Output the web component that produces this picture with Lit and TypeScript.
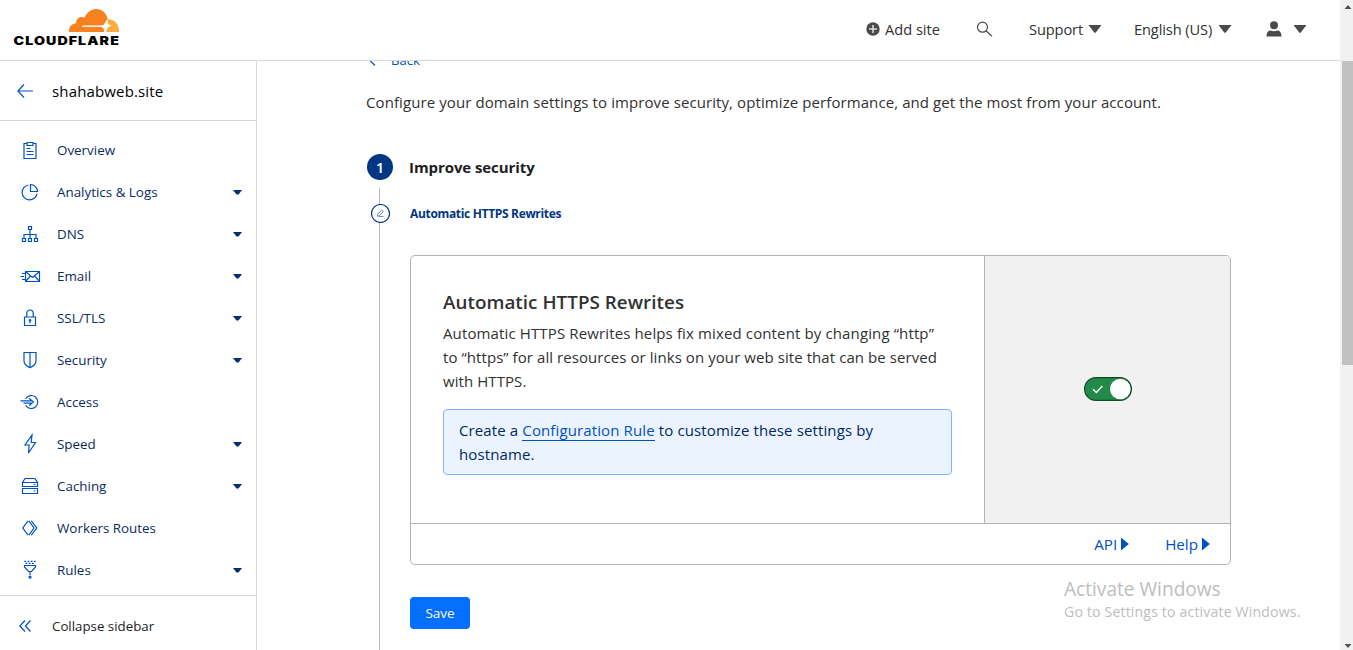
import { LitElement, html, css, svg } from "lit";
import { customElement, property } from "lit/decorators.js";

const ICONS: Record<string, unknown> = {
  overview: svg`<path d="M7 3.5H4v15h12v-15h-3M7 2.5h6v3H7zM6.5 8.5h4M6.5 11.5h7M6.5 14.5h7"/>`,
  analytics: svg`<path d="M8.500 3A7.500 7.500 0 1 0 17 11.700"/><path d="M10.500 2.500v7h7a7 7 0 0 0-7-7z"/>`,
  dns: svg`<path d="M8.500 2.500h3v3h-3zM2.500 14.500h3v3h-3zM8.500 14.500h3v3h-3zM14.500 14.500h3v3h-3zM10 5.500v9M4 14.500v-4h12v4"/>`,
  email: svg`<path d="M5.500 5.500h14v10h-14zM5.500 5.500l7 6 7-6M5.500 15.500l5-5.500M19.500 15.500l-5-5.500M2 7.500h3M.500 10.500h3.500M2 13.500h3"/>`,
  ssl: svg`<path d="M4.500 9h11v8.500h-11zM6.800 9V5.200a3.200 3.200 0 0 1 6.400 0V9M10 12v3.200"/><circle cx="10" cy="12.300" r=".7"/>`,
  security: svg`<path d="M4 2.500h12V11c0 3-2.500 5-6 6.700C6.500 16 4 14 4 11zM10 2.500v15"/>`,
  access: svg`<path d="M5.600 6.800A6.500 6.500 0 1 1 5.600 13.200M.500 8.800H12M3.500 11.200H12M9 6.300l4.500 3.700L9 13.700"/>`,
  speed: svg`<path d="M12 1.200L5 11h4.200L8.500 19 15.500 8.500h-4.300z"/>`,
  caching: svg`<path d="M2.500 10.500V6.500L5 2.500h10l2.500 4v4zM2.500 6.500h15M2.500 12.500h15v5h-15zM13.800 8.500h1.500M13.800 15h1.500"/>`,
  workers: svg`<path d="M8 2.800L2.800 10 8 17.200M8.800 2.800L14 10l-5.200 7.200M11.300 2.800L16.800 10l-5.500 7.200"/>`,
  rules: svg`<path d="M4.500 5.500h11v1.500l-4 4.500h-3l-4-4.500zM8.500 11.500h3M10 11.500v4M9.200 16.500h1.600v1.500H9.200z"/><path stroke-dasharray="1.800 1.400" d="M4.300 1.300h12M5.500 3.300h9"/>`,
};

const NAV: [string, string, boolean][] = [
  ["overview", "Overview", false],
  ["analytics", "Analytics & Logs", true],
  ["dns", "DNS", true],
  ["email", "Email", true],
  ["ssl", "SSL/TLS", true],
  ["security", "Security", true],
  ["access", "Access", false],
  ["speed", "Speed", true],
  ["caching", "Caching", true],
  ["workers", "Workers Routes", false],
  ["rules", "Rules", true],
];

@customElement("nav-item")
class NavItem extends LitElement {
  @property() icon = "";
  @property() label = "";
  @property({ type: Boolean }) expandable = false;

  static styles = css`
    :host { display: flex; align-items: center; height: 42px; padding: 0 14px 0 20px; color: #003682; font-size: 13.4px; }
    .icon { width: 20px; height: 20px; fill: none; stroke: #0051c3; stroke-width: 1.2; overflow: visible; }
    .label { flex: 1; margin-left: 17px; color: #0b2c5c; }
    .caret { width: 9px; height: 5px; fill: #00306e; }
  `;

  render() {
    return html`
      <svg class="icon" viewBox="0 0 20 20">${ICONS[this.icon]}</svg>
      <span class="label">${this.label}</span>
      ${this.expandable ? html`<svg class="caret" viewBox="0 0 9 5"><path d="M0 0h9L5.500 4.500h-2z"/></svg>` : ""}
    `;
  }
}

@customElement("app-root")
class AppRoot extends LitElement {
  static styles = css`
    :host { display: flex; height: 650px; overflow: hidden; background: #fff; color: #313131; font: 15px/24px "Open Sans", "Noto Sans", sans-serif; }
    * { box-sizing: border-box; }
    svg { display: block; flex: none; }
    h1, h2, h3, p { margin: 0; }
    .page { width: 1340px; display: grid; grid-template: 61px 589px / 257px 1fr; }
    .top { grid-column: 1 / 3; display: flex; align-items: center; border-bottom: 1px solid #d9d9d9; padding: 0 33px 2px 13px; font-size: 14.6px; }
    .logo { width: 108px; height: 60px; margin: 2px auto 0 0; }
    .word { font: 900 11.8px Inter, sans-serif; letter-spacing: .9px; }
    .entry { display: flex; align-items: center; }
    .add { gap: 5px; margin-right: 36px; width: 74px; white-space: nowrap; }
    .find { margin-right: 36px; }
    .support { width: 73px; justify-content: space-between; margin-right: 32px; }
    .language { width: 98px; justify-content: space-between; margin-right: 34px; }
    .language span, .support span { white-space: nowrap; }
    .language span, .support span { letter-spacing: -.1px; }
    .user { gap: 11px; }

    .side { border-right: 1px solid #d9d9d9; display: flex; flex-direction: column; }
    .site { height: 60px; display: flex; align-items: center; gap: 19px; padding-left: 17px; border-bottom: 1px solid #d9d9d9; font-size: 15px; letter-spacing: .15px; color: #000; font-weight: 500; }
    .line { fill: none; stroke: #0051c3; stroke-width: 1.2; }
    .nav { height: 474px; padding-top: 8px; overflow: hidden; }
    .collapse { flex: 1; border-top: 1px solid #d9d9d9; display: flex; align-items: center; gap: 20px; padding: 6px 0 0 19px; font-size: 13.3px; color: #1d1d1d; }

    .main { overflow: hidden; padding: 0 109px 0 110px; }
    .back { display: flex; align-items: center; gap: 15px; height: 24px; margin-top: -13px; padding-left: 1px; color: #0051c3; font-size: 13.1px; }
    .intro { margin: 18px 0 0 -1px; height: 24px; font-size: 15px; letter-spacing: .09px; white-space: nowrap; }
    .steps { display: grid; grid-template-columns: 26px 821px; column-gap: 17px; margin-top: 40px; }
    .rail { display: flex; flex-direction: column; align-items: center; }
    .num { width: 26px; height: 26px; border-radius: 50%; background: #003682; color: #fff; font-weight: 600; font-size: 15px; line-height: 26px; text-align: center; }
    .thread { width: 1px; height: 16px; margin: 8px 1px 0 0; background: #b6b7b9; }
    .long { height: 430px; margin-top: 0; }
    .step { font-size: 15px; font-weight: 700; letter-spacing: -.08px; color: #1d1d1d; line-height: 26px; margin-left: -1px; }
    .sub { font-size: 12px; font-weight: 700; letter-spacing: -.33px; color: #003682; line-height: 20px; margin-top: 24px; }
    .card { margin-top: 31px; height: 310px; border: 1px solid #b2b3b5; border-radius: 5px; overflow: hidden; display: grid; grid-template: 267px 1fr / 573px 1fr; }
    .body { padding: 34px 32px 0; }
    .title { font-size: 18.8px; line-height: 24px; font-weight: 600; letter-spacing: .05px; }
    .desc { margin-top: 7px; white-space: nowrap; letter-spacing: .07px; }
    .wide { letter-spacing: .13px; }
    .note { margin-top: 16px; height: 66px; width: 509px; padding: 8px 15px; border: 1px solid #82b6ff; border-radius: 4px; background: #ebf3ff; color: #00295f; letter-spacing: .12px; }
    .link { color: #0051c3; border-bottom: 1px solid #0051c3; line-height: 19px; display: inline-block; }
    .control { background: #f1f1f1; border-left: 1px solid #b2b3b5; display: flex; align-items: center; justify-content: center; padding-bottom: 2px; }
    .foot { grid-column: 1 / 3; border-top: 1px solid #b2b3b5; display: flex; justify-content: flex-end; align-items: center; padding: 0 20px 0 0; gap: 36px; color: #0051c3; font-size: 15.2px; }
    .foot span { display: flex; align-items: center; gap: 4px; }
    .save { width: 60px; height: 32px; margin-top: 32px; border-radius: 4px; background: #056fff; color: #fff; font-size: 13.5px; line-height: 32px; text-align: center; }

    .mark { position: absolute; left: 1064px; top: 577px; color: #bdbdbd; white-space: nowrap; }
    .big { font-size: 19.1px; line-height: 25px; }
    .small { font-size: 14.1px; letter-spacing: .16px; line-height: 20px; }

    .scroll { width: 13px; height: 650px; background: #f1f1f1; display: flex; flex-direction: column; align-items: flex-end; }
    .arrow { width: 11px; height: 17px; fill: #505050; }
    .thumb { width: 11px; height: 304px; margin: 44px 0 auto; background: #c1c1c1; }
  `;

  caret() {
    return html`<svg width="14" height="8" viewBox="0 0 14 8"><path fill="#4a4a4a" d="M.500 0h13L8 7.200q-1 1-2 0z"/></svg>`;
  }

  render() {
    return html`
      <div class="page">
        <header class="top">
          <svg class="logo" viewBox="13 0 108 60">
            <path fill="#f6821f" d="M69 32c-.600-4.500 2.500-8.500 7.200-8.700-.700-5 4.300-8 8.300-5.500C86.500 12.500 91 9 96 9c6 0 10.500 4.200 11.700 10l-1 7-2 6z"/>
            <path fill="#fbad41" d="M107.800 19.300c6.700-.3 11.700 5.300 11.200 12.700h-15l1.500-5z"/>
            <path fill="#fff" d="M82 25.500h18.500c2.500 0 4-.500 5-4l2.300-2.200c-.5 4.500.7 5.700 4.200 6.500-3.500.5-5 2-6 6.200h-2c0-3.500-.500-4.700-3.500-5L82 26.700z"/>
            <text class="word" x="13.500" y="45" textLength="106.500" lengthAdjust="spacingAndGlyphs">CLOUDFLARE</text>
          </svg>
          <div class="entry add">
            <svg width="14" height="14" viewBox="0 0 14 14"><circle cx="7" cy="7" r="6.700" fill="#4a4a4a"/><path stroke="#ddd" stroke-width="1.500" d="M7 3v8M3 7h8"/></svg>
            <span>Add site</span>
          </div>
          <svg class="find" width="17" height="17" viewBox="0 0 17 17" fill="none" stroke="#4a4a4a" stroke-width="1.200"><circle cx="6.500" cy="6.200" r="5"/><path d="M10 9.800l6 5.500"/></svg>
          <div class="entry support"><span>Support</span>${this.caret()}</div>
          <div class="entry language"><span>English (US)</span>${this.caret()}</div>
          <div class="entry user">
            <svg width="16" height="16" viewBox="0 0 16 16" fill="#4a4a4a"><circle cx="8" cy="4.200" r="4"/><path d="M.500 15.500c0-4 2-6 4-6q3.500 1.500 7 0c2 0 4 2 4 6z"/></svg>
            ${this.caret()}
          </div>
        </header>
        <aside class="side">
          <div class="site">
            <svg class="line" width="16" height="16" viewBox="0 0 16 16"><path d="M7 1.500L.900 8 7 14.500M.900 8H16"/></svg>
            <span>shahabweb.site</span>
          </div>
          <nav class="nav">
            ${NAV.map(([icon, label, more]) => html`<nav-item icon=${icon} label=${label} ?expandable=${more}></nav-item>`)}
          </nav>
          <div class="collapse">
            <svg class="line" width="13" height="12" viewBox="0 0 13 12"><path d="M6 .500L.900 6 6 11.500M11.500.500L6.400 6l5.100 5.500"/></svg>
            <span>Collapse sidebar</span>
          </div>
        </aside>
        <main class="main">
          <div class="back">
            <svg class="line" width="8" height="12" viewBox="0 0 8 12"><path d="M7 .500L1.500 6l5.500 5.500"/></svg>
            <span>Back</span>
          </div>
          <p class="intro">Configure your domain settings to improve security, optimize performance, and get the most from your account.</p>
          <section class="steps">
            <div class="rail">
              <div class="num">1</div>
              <div class="thread"></div>
              <svg width="20" height="19" viewBox="0 0 20 19" fill="none" stroke="#003682"><circle cx="10.500" cy="9.500" r="9" stroke-width="1.200"/><path stroke="#5f7fb0" stroke-width=".9" d="M7.300 12.300l.5-2.500 4-3.800 1.700 1.600-4 4zM9 12.500h4.500"/></svg>
              <div class="thread long"></div>
            </div>
            <div>
              <h1 class="step">Improve security</h1>
              <h2 class="sub">Automatic HTTPS Rewrites</h2>
              <div class="card">
                <div class="body">
                  <h3 class="title">Automatic HTTPS Rewrites</h3>
                  <p class="desc"><span class="wide">Automatic HTTPS Rewrites helps fix mixed content by changing “http”</span><br>to “https” for all resources or links on your web site that can be served<br>with HTTPS.</p>
                  <p class="note">Create a <span class="link">Configuration Rule</span> to customize these settings by<br>hostname.</p>
                </div>
                <div class="control">
                  <svg width="48" height="24" viewBox="0 0 48 24"><rect x=".600" y=".600" width="46.800" height="22.800" rx="11.400" fill="#228b49" stroke="#0f4a25" stroke-width="1.200"/><circle cx="36.300" cy="12" r="10.300" fill="#fff"/><path d="M9 12.200l3.300 3.300L18.300 9" fill="none" stroke="#fff" stroke-width="1.400"/></svg>
                </div>
                <div class="foot">
                  <span>API<svg width="8" height="14" viewBox="0 0 8 14"><path fill="#0051c3" d="M0 .500v13L7.800 7z"/></svg></span>
                  <span>Help<svg width="8" height="14" viewBox="0 0 8 14"><path fill="#0051c3" d="M0 .500v13L7.800 7z"/></svg></span>
                </div>
              </div>
              <div class="save">Save</div>
            </div>
          </section>
        </main>
      </div>
      <div class="scroll">
        <svg class="arrow" viewBox="0 0 11 17"><path d="M2.500 9h7L6 5z"/></svg>
        <div class="thumb"></div>
        <svg class="arrow" viewBox="0 0 11 17"><path d="M2.500 11h7L6 15z"/></svg>
      </div>
      <div class="mark"><div class="big">Activate Windows</div><div class="small">Go to Settings to activate Windows.</div></div>
    `;
  }
}
